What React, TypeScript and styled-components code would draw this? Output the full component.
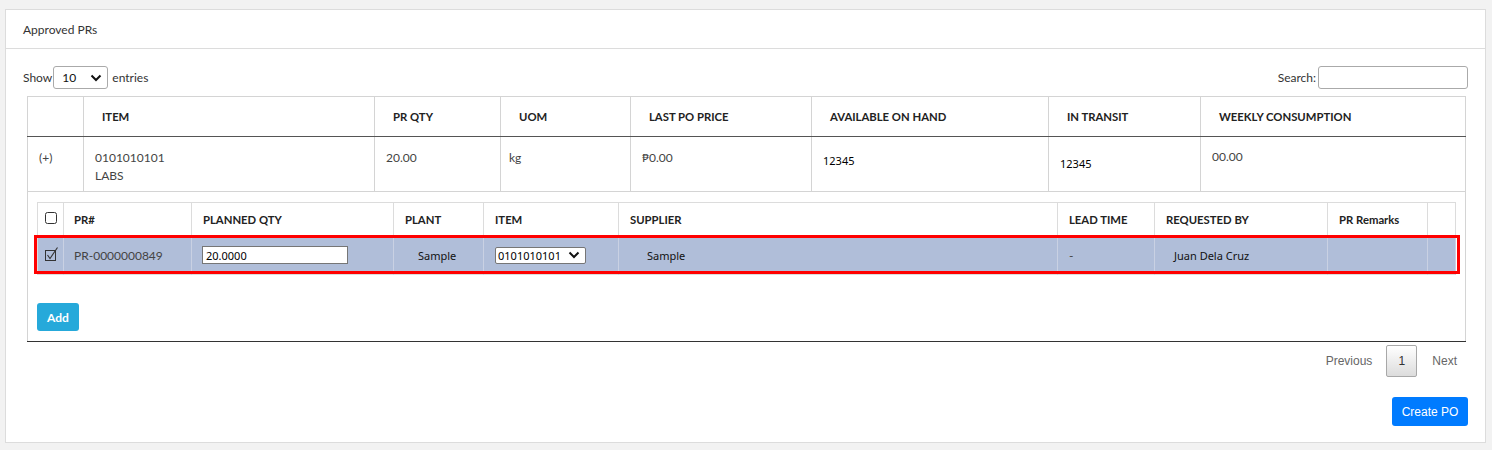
import React from "react";
import styled, { createGlobalStyle } from "styled-components";

const Global = createGlobalStyle`
  html, body { margin: 0; padding: 0; background: #f2f2f2; }
  body { font-family: Lato, "Liberation Sans", sans-serif; font-size: 12px; color: #333; }
  * { box-sizing: border-box; }
`;

const Page = styled.div`
  padding: 9px 6px 8px 5px;
`;

const Card = styled.div`
  background: #fff;
  border: 1px solid #dcdcdc;
  display: flex;
  flex-direction: column;
`;

const CardHeader = styled.div`
  flex-shrink: 0;
  height: 39px;
  border-bottom: 1px solid #dcdcdc;
  display: flex;
  align-items: center;
  padding-left: 17px;
  font-size: 12px;
  color: #333;
`;

const CardBody = styled.div`
  padding: 17px 17px 16px 17px;
  display: flex;
  flex-direction: column;
`;

const Toolbar = styled.div`
  display: flex;
  justify-content: space-between;
  align-items: center;
  height: 23px;
  margin-bottom: 7px;
`;

const Label = styled.label<{ $gap: number }>`
  display: flex;
  align-items: center;
  gap: ${(p) => p.$gap}px;
  color: #333;
  font-size: 12px;
`;

const SelectBox = styled.div<{ $w: number; $h: number; $r: number; $pl: number }>`
  width: ${(p) => p.$w}px;
  height: ${(p) => p.$h}px;
  border: 1px solid ${(p) => (p.$r > 2 ? "#aaa" : "#767676")};
  border-radius: ${(p) => p.$r}px;
  background: #fff;
  display: flex;
  align-items: center;
  justify-content: space-between;
  padding: 0 5px 0 ${(p) => p.$pl}px;
  color: #111;
  font-size: 12px;
`;

const SearchInput = styled.div`
  width: 150px;
  height: 23px;
  border: 1px solid #aaa;
  border-radius: 3px;
  background: #fff;
`;

const TableWrap = styled.div`
  padding: 0 4px 0 4px;
`;

const Table = styled.table`
  width: 100%;
  border-collapse: collapse;
  table-layout: fixed;
  border: 1px solid #d4d4d4;
  border-bottom: 1px solid #333;
`;

const Th = styled.th<{ $pl?: number }>`
  height: 40px;
  text-align: left;
  font-weight: 700;
  font-size: 11.3px;
  color: #222;
  padding: 0 0 0 ${(p) => p.$pl ?? 18}px;
  border-right: 1px solid #d4d4d4;
  border-bottom: 1px solid #555;
`;

const Td = styled.td<{ $pl?: number; $pt?: number }>`
  vertical-align: top;
  height: 55px;
  padding: ${(p) => p.$pt ?? 12}px 0 0 ${(p) => p.$pl ?? 11}px;
  color: #444;
  font-size: 12px;
  line-height: 18px;
  border-right: 1px solid #d4d4d4;
  border-bottom: 1px solid #d4d4d4;
`;

const Plain = styled.span<{ $dy?: number }>`
  display: inline-block;
  font-family: "Noto Sans", "Open Sans", sans-serif;
  font-size: 11px;
  color: #000;
  margin-top: ${(p) => p.$dy ?? 0}px;
`;

const NestedCell = styled.td`
  padding: 10px 9px 10px 9px;
  border-bottom: 1px solid #333;
`;

const InnerWrap = styled.div`
  position: relative;
`;

const Highlight = styled.div`
  position: absolute;
  left: -3px;
  right: -4px;
  top: 33px;
  height: 39px;
  border: 3px solid #ff0000;
  pointer-events: none;
`;

const InnerTable = styled.table`
  width: 100%;
  border-collapse: collapse;
  table-layout: fixed;
  border: 1px solid #dcdcdc;
`;

const ITh = styled.th<{ $pl?: number }>`
  height: 33px;
  text-align: left;
  font-weight: 700;
  font-size: 11.3px;
  color: #222;
  padding: 0 0 0 ${(p) => p.$pl ?? 11}px;
  border-right: 1px solid #dcdcdc;
  border-bottom: 1px solid #dcdcdc;
`;

const SelRow = styled.tr`
  background: #b0bed9;
`;

const ITd = styled.td<{ $pl?: number; $sans?: boolean }>`
  height: 39px;
  padding: 0 0 0 ${(p) => p.$pl ?? 11}px;
  font-size: ${(p) => (p.$sans ? 11 : 12)}px;
  font-family: ${(p) => (p.$sans ? `"Noto Sans", "Open Sans", sans-serif` : "inherit")};
  color: ${(p) => (p.$sans ? "#111" : "#444")};
  border-right: 1px solid #c9d1e3;
`;

const QtyInput = styled.div`
  width: 146px;
  height: 18px;
  border: 1px solid #767676;
  background: #fff;
  display: flex;
  align-items: center;
  padding-left: 3px;
  font-family: "Noto Sans", "Open Sans", sans-serif;
  font-size: 11px;
  color: #000;
`;

const AddButton = styled.button`
  margin-top: 28px;
  width: 42px;
  height: 28px;
  background: #26a9da;
  border: none;
  border-radius: 3px;
  color: #fff;
  font-family: Lato, sans-serif;
  font-weight: 700;
  font-size: 12px;
  padding: 0;
`;

const Pager = styled.div`
  display: flex;
  justify-content: flex-end;
  align-items: center;
  margin-top: 3px;
  padding-right: 11px;
  font-family: "Liberation Sans", Arial, sans-serif;
  font-size: 12px;
  color: #666;
`;

const PageLink = styled.span`
  padding: 0 13px 0 0;
`;

const PageCurrent = styled.span`
  width: 31px;
  height: 32px;
  border: 1px solid #a8a8a8;
  border-radius: 2px;
  background: linear-gradient(#fff, #dcdcdc);
  display: flex;
  align-items: center;
  justify-content: center;
  color: #333;
  margin: 0 15px 0 1px;
`;

const Footer = styled.div`
  display: flex;
  justify-content: flex-end;
  margin-top: 20px;
`;

const PrimaryButton = styled.button`
  width: 76px;
  height: 29px;
  border: none;
  border-radius: 3px;
  background: #007bff;
  color: #fff;
  font-family: "Liberation Sans", Arial, sans-serif;
  font-size: 12px;
  padding: 0;
`;

const Chevron = () => (
  <svg width="12" height="8" viewBox="0 0 12 8">
    <path d="M1.5 1.5 L6 6 L10.5 1.5" stroke="#111" strokeWidth="2" fill="none" />
  </svg>
);

const EmptyBox = () => (
  <svg width="12" height="12" viewBox="0 0 12 12">
    <rect x="0.5" y="0.5" width="11" height="11" rx="2" fill="#fff" stroke="#333" />
  </svg>
);

const CheckedBox = () => (
  <svg width="14" height="14" viewBox="0 0 14 14">
    <rect x="0.5" y="3.5" width="10" height="10" fill="none" stroke="#333" />
    <path d="M2.5 8 L5 11.5 L12.5 0.5" stroke="#333" strokeWidth="1.1" fill="none" />
  </svg>
);

const outerCols = [56, 291, 126, 130, 181, 237, 152, 265];
const innerCols = [26, 128, 202, 90, 135, 439, 97, 173, 100, 28];

export default function App() {
  return (
    <Page>
      <Global />
      <Card>
        <CardHeader>Approved PRs</CardHeader>
        <CardBody>
          <Toolbar>
            <Label $gap={1}>
              Show
              <SelectBox $w={55} $h={23} $r={3} $pl={8}>
                10 <Chevron />
              </SelectBox>
              <span>&nbsp;entries</span>
            </Label>
            <Label $gap={2}>
              Search:
              <SearchInput />
            </Label>
          </Toolbar>
          <TableWrap>
            <Table>
              <colgroup>
                {outerCols.map((w, i) => (
                  <col key={i} style={{ width: w }} />
                ))}
              </colgroup>
              <thead>
                <tr>
                  <Th />
                  <Th>ITEM</Th>
                  <Th>PR QTY</Th>
                  <Th>UOM</Th>
                  <Th>LAST PO PRICE</Th>
                  <Th>AVAILABLE ON HAND</Th>
                  <Th>IN TRANSIT</Th>
                  <Th>WEEKLY CONSUMPTION</Th>
                </tr>
              </thead>
              <tbody>
                <tr>
                  <Td>(+)</Td>
                  <Td>
                    0101010101
                    <br />
                    LABS
                  </Td>
                  <Td>20.00</Td>
                  <Td $pl={8}>kg</Td>
                  <Td>₱0.00</Td>
                  <Td>
                    <Plain $dy={3}>12345</Plain>
                  </Td>
                  <Td>
                    <Plain $dy={6}>12345</Plain>
                  </Td>
                  <Td $pt={11}>00.00</Td>
                </tr>
                <tr>
                  <NestedCell colSpan={8}>
                    <InnerWrap>
                      <InnerTable>
                        <colgroup>
                          {innerCols.map((w, i) => (
                            <col key={i} style={{ width: w }} />
                          ))}
                        </colgroup>
                        <thead>
                          <tr>
                            <ITh $pl={7}>
                              <EmptyBox />
                            </ITh>
                            <ITh $pl={10}>PR#</ITh>
                            <ITh>PLANNED QTY</ITh>
                            <ITh>PLANT</ITh>
                            <ITh>ITEM</ITh>
                            <ITh>SUPPLIER</ITh>
                            <ITh>LEAD TIME</ITh>
                            <ITh>REQUESTED BY</ITh>
                            <ITh>PR Remarks</ITh>
                            <ITh />
                          </tr>
                        </thead>
                        <tbody>
                          <SelRow>
                            <ITd $pl={7}>
                              <CheckedBox />
                            </ITd>
                            <ITd $pl={10}>PR-0000000849</ITd>
                            <ITd $pl={10}>
                              <QtyInput>20.0000</QtyInput>
                            </ITd>
                            <ITd $sans $pl={24}>
                              Sample
                            </ITd>
                            <ITd $pl={11}>
                              <SelectBox $w={91} $h={17} $r={2} $pl={2}>
                                <Plain>0101010101</Plain>
                                <Chevron />
                              </SelectBox>
                            </ITd>
                            <ITd $sans $pl={28}>
                              Sample
                            </ITd>
                            <ITd $pl={11}>-</ITd>
                            <ITd $sans $pl={19}>
                              Juan Dela Cruz
                            </ITd>
                            <ITd />
                            <ITd />
                          </SelRow>
                        </tbody>
                      </InnerTable>
                      <Highlight />
                    </InnerWrap>
                    <AddButton>Add</AddButton>
                  </NestedCell>
                </tr>
              </tbody>
            </Table>
          </TableWrap>
          <Pager>
            <PageLink>Previous</PageLink>
            <PageCurrent>1</PageCurrent>
            <span>Next</span>
          </Pager>
          <Footer>
            <PrimaryButton>Create PO</PrimaryButton>
          </Footer>
        </CardBody>
      </Card>
    </Page>
  );
}
